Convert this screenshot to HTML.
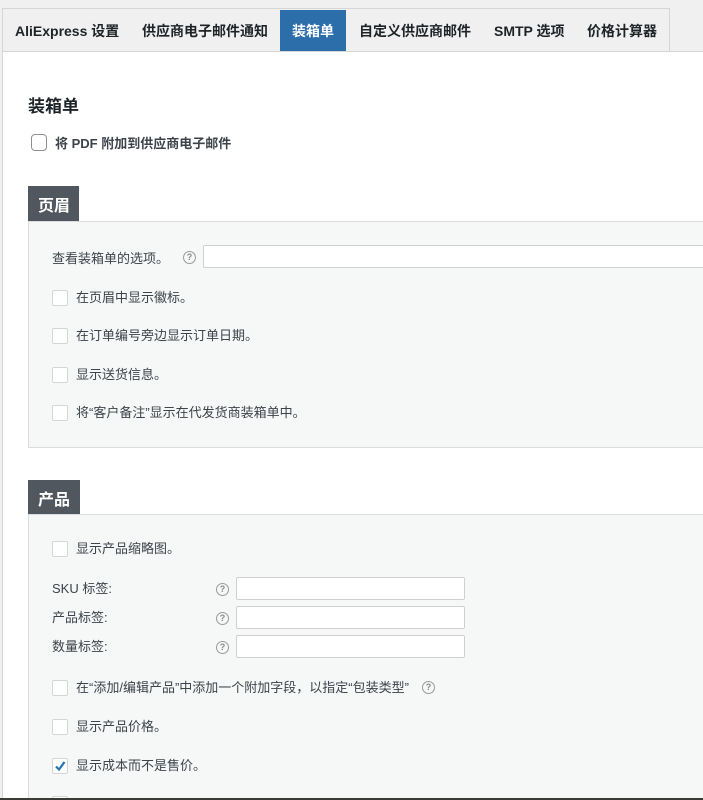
<!DOCTYPE html>
<html style="width:703px;height:800px;overflow:hidden"><head><meta charset="utf-8"><style>
*{margin:0;padding:0;box-sizing:border-box}
body{width:703px;height:800px;overflow:hidden;background:#f0f0f1;position:relative;font-family:"Liberation Sans","Noto Sans CJK SC",sans-serif;color:#3c434a}
.a{position:absolute;white-space:nowrap}
.tabs{left:2px;top:8px;width:668px;height:44px;background:#f0f0f0;border:1px solid #d6d6d6;border-bottom:none}
.tab{position:absolute;top:14px;font-size:14px;font-weight:bold;color:#1d2327}
.act{left:280px;top:10px;width:66px;height:42px;background:#2c6ea9}
.main{left:2px;top:51px;width:701px;height:749px;background:#fff;border-left:1px solid #d6d6d6;border-top:1px solid #d6d6d6}
.hd{background:#50575e;color:#fff;font-weight:bold;font-size:16px;padding:6px 10px 0 10px}
.box{background:#f6f7f7;border:1px solid #dcdcde}
.cb{width:16px;height:16px;border:1px solid #d5d5d5;background:#fff;border-radius:2px}
.lb{font-size:13px;color:#3c434a}
.q{width:13px;height:13px;border:1.3px solid #9a9a9a;border-radius:50%;font-size:9px;color:#8a8a8a;text-align:center;line-height:11px;font-weight:bold}
.in{background:#fff;border:1px solid #d0d0d0;border-radius:2px;height:23px}
</style></head><body>
<div class="a tabs"></div>
<div class="a act"></div>
<div class="a tab" style="left:15px;top:21px">AliExpress 设置</div>
<div class="a tab" style="left:142px;top:21px">供应商电子邮件通知</div>
<div class="a tab" style="left:292px;top:21px;color:#fff">装箱单</div>
<div class="a tab" style="left:359px;top:21px">自定义供应商邮件</div>
<div class="a tab" style="left:494px;top:21px">SMTP 选项</div>
<div class="a tab" style="left:587px;top:21px">价格计算器</div>
<div class="a main"></div>
<div class="a" style="left:28px;top:92px;font-size:17px;font-weight:bold;color:#1d2327">装箱单</div>
<div class="a cb" style="left:31px;top:134px;width:16px;height:17px;border:1.5px solid #8c8f94;border-radius:4px"></div>
<div class="a lb" style="left:55px;top:133px;font-weight:bold;color:#3c434a">将 PDF 附加到供应商电子邮件</div>

<div class="a hd" style="left:28px;top:186px;width:51px;height:35px">页眉</div>
<div class="a box" style="left:28px;top:221px;width:690px;height:227px"></div>
<div class="a lb" style="left:52px;top:248px">查看装箱单的选项。</div>
<div class="a q" style="left:183px;top:251px">?</div>
<div class="a in" style="left:203px;top:245px;width:510px"></div>
<div class="a cb" style="left:52px;top:290px"></div><div class="a lb" style="left:76px;top:287px">在页眉中显示徽标。</div>
<div class="a cb" style="left:52px;top:328px"></div><div class="a lb" style="left:76px;top:325px">在订单编号旁边显示订单日期。</div>
<div class="a cb" style="left:52px;top:367px"></div><div class="a lb" style="left:76px;top:364px">显示送货信息。</div>
<div class="a cb" style="left:52px;top:405px"></div><div class="a lb" style="left:76px;top:402px">将“客户备注”显示在代发货商装箱单中。</div>

<div class="a hd" style="left:28px;top:480px;width:52px;height:34px">产品</div>
<div class="a box" style="left:28px;top:514px;width:690px;height:286px"></div>
<div class="a cb" style="left:52px;top:541px"></div><div class="a lb" style="left:76px;top:538px">显示产品缩略图。</div>
<div class="a lb" style="left:52px;top:578px">SKU 标签:</div><div class="a q" style="left:216px;top:583px">?</div><div class="a in" style="left:236px;top:577px;width:229px"></div>
<div class="a lb" style="left:52px;top:607px">产品标签:</div><div class="a q" style="left:216px;top:612px">?</div><div class="a in" style="left:236px;top:606px;width:229px"></div>
<div class="a lb" style="left:52px;top:636px">数量标签:</div><div class="a q" style="left:216px;top:641px">?</div><div class="a in" style="left:236px;top:635px;width:229px"></div>
<div class="a cb" style="left:52px;top:680px"></div><div class="a lb" style="left:76px;top:677px">在“添加/编辑产品”中添加一个附加字段，以指定“包装类型”</div><div class="a q" style="left:422px;top:681px">?</div>
<div class="a cb" style="left:52px;top:719px"></div><div class="a lb" style="left:76px;top:716px">显示产品价格。</div>
<div class="a cb" style="left:52px;top:758px"><svg width="14" height="14" viewBox="0 0 14 14" style="position:absolute;left:0;top:0"><path d="M3 7.5 L6 10.5 L11.5 3" stroke="#2271b1" stroke-width="2.2" fill="none"/></svg></div><div class="a lb" style="left:76px;top:755px">显示成本而不是售价。</div>
<div class="a cb" style="left:52px;top:796px;height:4px"></div>
<div class="a" style="left:0;top:798px;width:703px;height:2px;background:#3a3a36"></div>
</body></html>
